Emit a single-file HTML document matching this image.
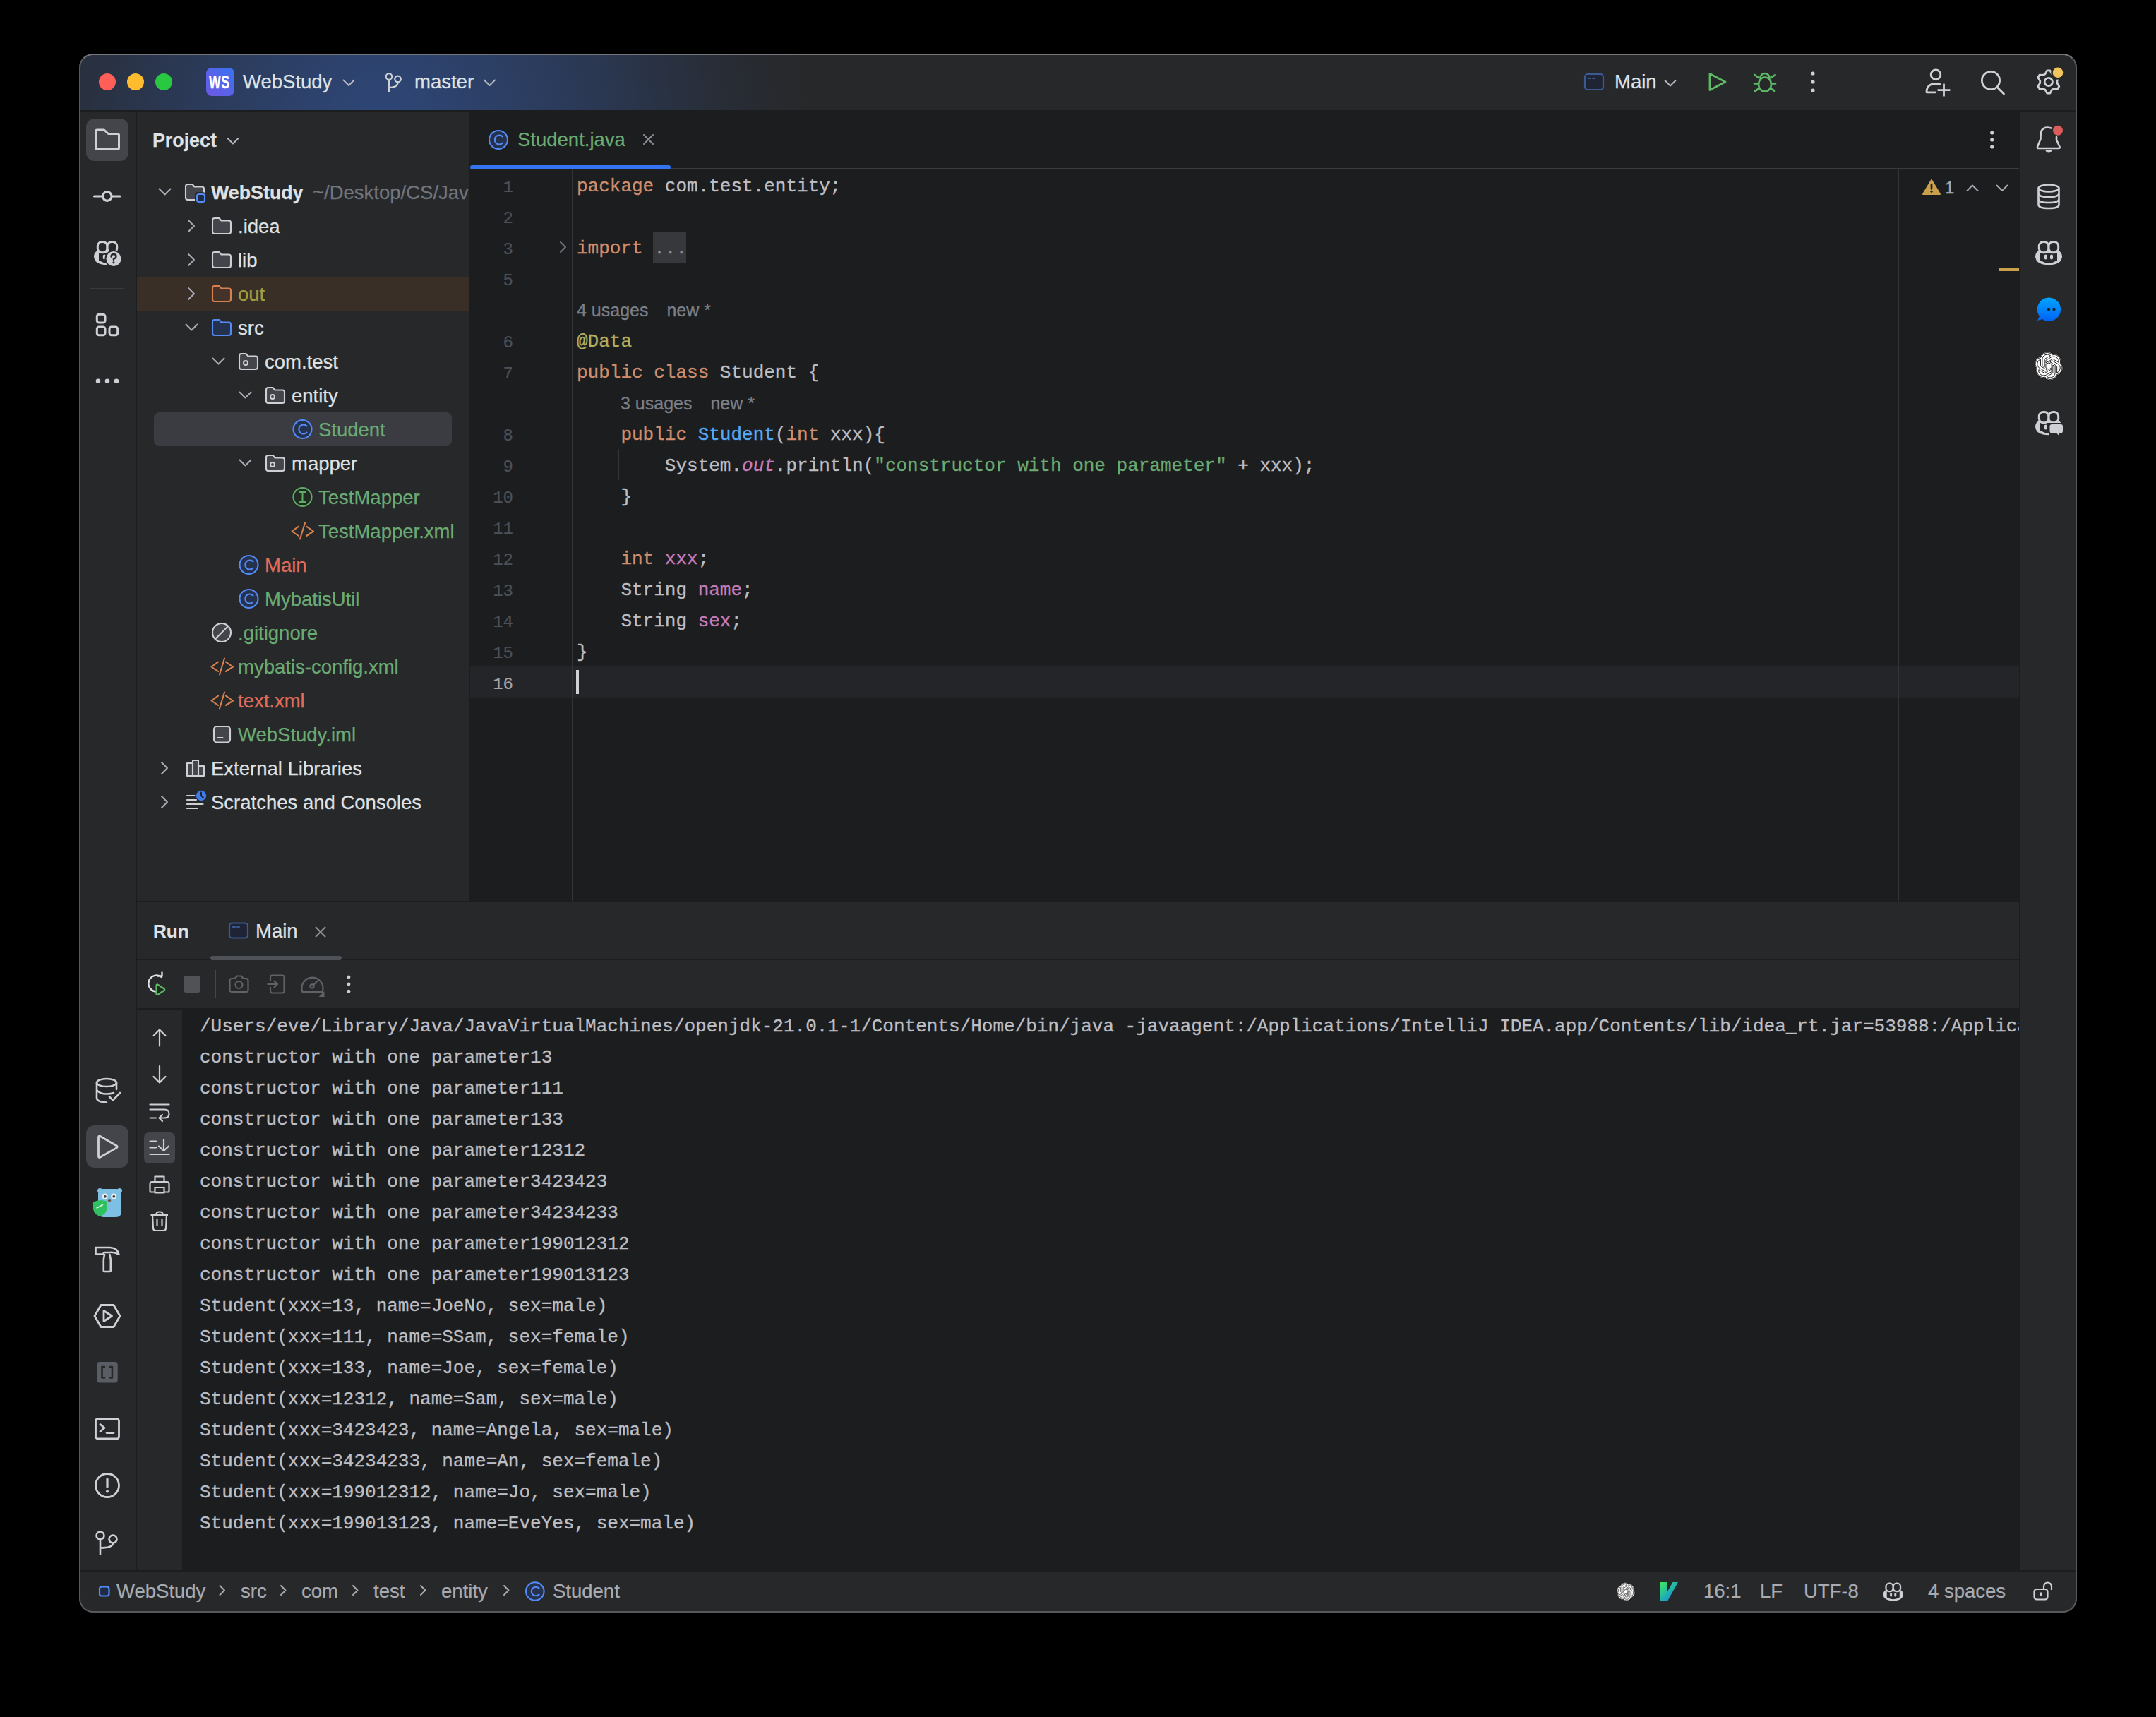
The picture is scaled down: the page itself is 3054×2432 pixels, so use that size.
<!DOCTYPE html><html><head><meta charset='utf-8'><title>IntelliJ IDEA - WebStudy</title><style>
*{box-sizing:border-box;margin:0;padding:0}
html,body{width:3054px;height:2432px;background:#000;overflow:hidden}
body{position:relative;font-family:"Liberation Sans", sans-serif;}
.a{position:absolute}
.t{position:absolute;font-family:"Liberation Sans", sans-serif;font-size:27px;line-height:48px;white-space:nowrap;color:#DFE1E5;-webkit-text-stroke:0.25px currentColor}
.m{position:absolute;font-family:"Liberation Mono", monospace;font-size:26px;line-height:44px;white-space:pre;color:#BCBEC4;-webkit-text-stroke:0.35px currentColor}
.clip{position:absolute;left:0;top:0;width:3054px;height:2432px}
#win{position:absolute;left:0;top:0;width:3054px;height:2432px;clip-path:inset(76px 112px 148px 112px round 20px);}
</style></head><body><div id='win'><div class='a' style='left:112px;top:76px;width:2830px;height:2208px;background:#27282A;'></div><div class='a' style='left:112px;top:76px;width:2830px;height:80px;background:#27282A;background:radial-gradient(ellipse 600px 700px at 430px 130px, rgba(50,88,165,0.66) 0%, rgba(50,88,165,0.38) 45%, rgba(50,88,165,0.10) 80%, rgba(50,88,165,0) 100%), #27282A;'></div><div class='a' style='left:112px;top:156px;width:2830px;height:2px;background:#1C1D1F;'></div><div class='a' style='left:192px;top:158px;width:2px;height:2066px;background:#1C1D1F;'></div><div class='a' style='left:664px;top:158px;width:2196px;height:1118px;background:#1C1D1F;'></div><div class='a' style='left:2860px;top:158px;width:2px;height:2066px;background:#1C1D1F;'></div><div class='a' style='left:194px;top:1276px;width:2666px;height:2px;background:#1C1D1F;'></div><div class='a' style='left:194px;top:1358px;width:2666px;height:2px;background:#1C1D1F;'></div><div class='a' style='left:194px;top:1428px;width:2666px;height:2px;background:#1C1D1F;'></div><div class='a' style='left:258px;top:1430px;width:2602px;height:794px;background:#1C1D1F;'></div><div class='a' style='left:112px;top:2224px;width:2830px;height:2px;background:#1C1D1F;'></div><div class='a' style='left:122px;top:168px;width:60px;height:60px;background:#43454A;border-radius:12px;'></div><div class='a' style='left:122px;top:1594px;width:60px;height:60px;background:#43454A;border-radius:12px;'></div><div class='a' style='left:204px;top:1604px;width:44px;height:44px;background:#43454A;border-radius:7px;'></div><div class='a' style='left:128px;top:408px;width:48px;height:2px;background:#393B40;'></div><div class='a' style='left:140px;top:104px;width:24px;height:24px;border-radius:12px;background:#FF5F57'></div><div class='a' style='left:180px;top:104px;width:24px;height:24px;border-radius:12px;background:#FEBC2E'></div><div class='a' style='left:220px;top:104px;width:24px;height:24px;border-radius:12px;background:#28C840'></div><div class='a' style='left:292px;top:96px;width:40px;height:40px;background:#4B6EF0;border-radius:8px;background:linear-gradient(225deg,#3574F0 0%,#5A62EA 55%,#6F58E2 100%);'></div><div class='t' style='left:296px;top:92px;color:#FFFFFF;font-size:26px;line-height:48px;font-weight:700;transform:scaleX(0.68);transform-origin:0 0;letter-spacing:1px;'>WS</div><div class='t' style='left:344px;top:92px;color:#DFE1E5;font-size:27.5px;line-height:48px;font-weight:400;'>WebStudy</div><div class='t' style='left:587px;top:92px;color:#DFE1E5;font-size:27.5px;line-height:48px;font-weight:400;'>master</div><div class='t' style='left:2287px;top:92px;color:#DFE1E5;font-size:27.5px;line-height:48px;font-weight:400;'>Main</div><div class='t' style='left:216px;top:175px;color:#DFE1E5;font-size:26.8px;line-height:48px;font-weight:700;'>Project</div><div class='clip' style='clip-path:inset(158px 2390px 1156px 194px)'><div class='a' style='left:194px;top:392px;width:470px;height:48px;background:#3A2F26;'></div><div class='a' style='left:218px;top:584px;width:422px;height:48px;background:#3A3C41;border-radius:8px;'></div><div class='t' style='left:299px;top:249px;color:#DFE1E5;font-size:26.8px;line-height:48px;font-weight:700;'>WebStudy</div><div class='t' style='left:337px;top:297px;color:#DFE1E5;font-size:27.5px;line-height:48px;font-weight:400;'>.idea</div><div class='t' style='left:337px;top:345px;color:#DFE1E5;font-size:27.5px;line-height:48px;font-weight:400;'>lib</div><div class='t' style='left:337px;top:393px;color:#A29E3F;font-size:27.5px;line-height:48px;font-weight:400;'>out</div><div class='t' style='left:337px;top:441px;color:#DFE1E5;font-size:27.5px;line-height:48px;font-weight:400;'>src</div><div class='t' style='left:375px;top:489px;color:#DFE1E5;font-size:27.5px;line-height:48px;font-weight:400;'>com.test</div><div class='t' style='left:413px;top:537px;color:#DFE1E5;font-size:27.5px;line-height:48px;font-weight:400;'>entity</div><div class='t' style='left:451px;top:585px;color:#6AAB73;font-size:27.5px;line-height:48px;font-weight:400;'>Student</div><div class='t' style='left:413px;top:633px;color:#DFE1E5;font-size:27.5px;line-height:48px;font-weight:400;'>mapper</div><div class='t' style='left:451px;top:681px;color:#6AAB73;font-size:27.5px;line-height:48px;font-weight:400;'>TestMapper</div><div class='t' style='left:451px;top:729px;color:#6AAB73;font-size:27.5px;line-height:48px;font-weight:400;'>TestMapper.xml</div><div class='t' style='left:375px;top:777px;color:#E06C5C;font-size:27.5px;line-height:48px;font-weight:400;'>Main</div><div class='t' style='left:375px;top:825px;color:#6AAB73;font-size:27.5px;line-height:48px;font-weight:400;'>MybatisUtil</div><div class='t' style='left:337px;top:873px;color:#6AAB73;font-size:27.5px;line-height:48px;font-weight:400;'>.gitignore</div><div class='t' style='left:337px;top:921px;color:#6AAB73;font-size:27.5px;line-height:48px;font-weight:400;'>mybatis-config.xml</div><div class='t' style='left:337px;top:969px;color:#E06C5C;font-size:27.5px;line-height:48px;font-weight:400;'>text.xml</div><div class='t' style='left:337px;top:1017px;color:#6AAB73;font-size:27.5px;line-height:48px;font-weight:400;'>WebStudy.iml</div><div class='t' style='left:299px;top:1065px;color:#DFE1E5;font-size:27.5px;line-height:48px;font-weight:400;'>External Libraries</div><div class='t' style='left:299px;top:1113px;color:#DFE1E5;font-size:27.5px;line-height:48px;font-weight:400;'>Scratches and Consoles</div><div class='t' style='left:443px;top:249px;color:#71757C;font-size:27.5px;line-height:48px;font-weight:400;'>~/Desktop/CS/JavaWeb/WebStudy</div></div><div class='t' style='left:733px;top:174px;color:#6AAB73;font-size:27.5px;line-height:48px;font-weight:400;'>Student.java</div><div class='a' style='left:666px;top:234px;width:284px;height:6px;background:#3574F0;border-radius:3px;'></div><div class='a' style='left:950px;top:238px;width:1910px;height:2px;background:#393B40;'></div><div class='a' style='left:666px;top:944px;width:2194px;height:44px;background:#242528;'></div><div class='a' style='left:925px;top:329px;width:47px;height:43px;background:#37383C;'></div><div class='a' style='left:810px;top:240px;width:2px;height:1036px;background:#313438;'></div><div class='a' style='left:2688px;top:240px;width:2px;height:1036px;background:#313438;'></div><div class='m' style='left:600px;width:127px;text-align:right;top:244px;color:#4B5059;font-size:24px;-webkit-text-stroke:0.2px currentColor'>1</div><div class='m' style='left:817px;top:242px'><span style='color:#CF8E6D;'>package </span><span style='color:#BCBEC4;'>com.test.entity;</span></div><div class='m' style='left:600px;width:127px;text-align:right;top:288px;color:#4B5059;font-size:24px;-webkit-text-stroke:0.2px currentColor'>2</div><div class='m' style='left:600px;width:127px;text-align:right;top:332px;color:#4B5059;font-size:24px;-webkit-text-stroke:0.2px currentColor'>3</div><div class='m' style='left:817px;top:330px'><span style='color:#CF8E6D;'>import </span><span style='color:#8C8F95'>...</span></div><div class='m' style='left:600px;width:127px;text-align:right;top:376px;color:#4B5059;font-size:24px;-webkit-text-stroke:0.2px currentColor'>5</div><div class='t' style='left:817px;top:417px;color:#7C8088;font-size:25px;line-height:44px;font-weight:400;'>4 usages<span style='margin-left:26px'>new *</span></div><div class='m' style='left:600px;width:127px;text-align:right;top:464px;color:#4B5059;font-size:24px;-webkit-text-stroke:0.2px currentColor'>6</div><div class='m' style='left:817px;top:462px'><span style='color:#B3AE60;'>@Data</span></div><div class='m' style='left:600px;width:127px;text-align:right;top:508px;color:#4B5059;font-size:24px;-webkit-text-stroke:0.2px currentColor'>7</div><div class='m' style='left:817px;top:506px'><span style='color:#CF8E6D;'>public class </span><span style='color:#BCBEC4;'>Student {</span></div><div class='t' style='left:879px;top:549px;color:#7C8088;font-size:25px;line-height:44px;font-weight:400;'>3 usages<span style='margin-left:26px'>new *</span></div><div class='m' style='left:600px;width:127px;text-align:right;top:596px;color:#4B5059;font-size:24px;-webkit-text-stroke:0.2px currentColor'>8</div><div class='m' style='left:817px;top:594px'><span style='color:#CF8E6D;'>    public </span><span style='color:#56A8F5;'>Student</span><span style='color:#BCBEC4;'>(</span><span style='color:#CF8E6D;'>int </span><span style='color:#BCBEC4;'>xxx){</span></div><div class='m' style='left:600px;width:127px;text-align:right;top:640px;color:#4B5059;font-size:24px;-webkit-text-stroke:0.2px currentColor'>9</div><div class='m' style='left:817px;top:638px'><span style='color:#BCBEC4;'>        System.</span><span style='color:#C77DBB;font-style:italic;'>out</span><span style='color:#BCBEC4;'>.println(</span><span style='color:#6AAB73;'>&quot;constructor with one parameter&quot;</span><span style='color:#BCBEC4;'> + xxx);</span></div><div class='m' style='left:600px;width:127px;text-align:right;top:684px;color:#4B5059;font-size:24px;-webkit-text-stroke:0.2px currentColor'>10</div><div class='m' style='left:817px;top:682px'><span style='color:#BCBEC4;'>    }</span></div><div class='m' style='left:600px;width:127px;text-align:right;top:728px;color:#4B5059;font-size:24px;-webkit-text-stroke:0.2px currentColor'>11</div><div class='m' style='left:600px;width:127px;text-align:right;top:772px;color:#4B5059;font-size:24px;-webkit-text-stroke:0.2px currentColor'>12</div><div class='m' style='left:817px;top:770px'><span style='color:#CF8E6D;'>    int </span><span style='color:#C77DBB;'>xxx</span><span style='color:#BCBEC4;'>;</span></div><div class='m' style='left:600px;width:127px;text-align:right;top:816px;color:#4B5059;font-size:24px;-webkit-text-stroke:0.2px currentColor'>13</div><div class='m' style='left:817px;top:814px'><span style='color:#BCBEC4;'>    String </span><span style='color:#C77DBB;'>name</span><span style='color:#BCBEC4;'>;</span></div><div class='m' style='left:600px;width:127px;text-align:right;top:860px;color:#4B5059;font-size:24px;-webkit-text-stroke:0.2px currentColor'>14</div><div class='m' style='left:817px;top:858px'><span style='color:#BCBEC4;'>    String </span><span style='color:#C77DBB;'>sex</span><span style='color:#BCBEC4;'>;</span></div><div class='m' style='left:600px;width:127px;text-align:right;top:904px;color:#4B5059;font-size:24px;-webkit-text-stroke:0.2px currentColor'>15</div><div class='m' style='left:817px;top:902px'><span style='color:#BCBEC4;'>}</span></div><div class='m' style='left:600px;width:127px;text-align:right;top:948px;color:#A1A3AB;font-size:24px;-webkit-text-stroke:0.2px currentColor'>16</div><div class='a' style='left:816px;top:949px;width:4px;height:34px;background:#CED0D6;'></div><div class='a' style='left:875px;top:636px;width:2px;height:44px;background:#313438;'></div><div class='t' style='left:2755px;top:242px;color:#A8ABB2;font-size:24px;line-height:48px;font-weight:400;'>1</div><div class='a' style='left:2832px;top:380px;width:28px;height:4px;background:#C9A04C;'></div><div class='t' style='left:217px;top:1295px;color:#DFE1E5;font-size:26px;line-height:48px;font-weight:700;'>Run</div><div class='t' style='left:362px;top:1295px;color:#DFE1E5;font-size:27.5px;line-height:48px;font-weight:400;'>Main</div><div class='a' style='left:298px;top:1354px;width:186px;height:6px;background:#4E5157;border-radius:3px;'></div><div class='a' style='left:260px;top:1382px;width:24px;height:24px;background:#505256;border-radius:4px;'></div><div class='a' style='left:304px;top:1374px;width:2px;height:40px;background:#43454A;'></div><div class='clip' style='clip-path:inset(1430px 194px 208px 258px)'><div class='m' style='left:283px;top:1432px'>/Users/eve/Library/Java/JavaVirtualMachines/openjdk-21.0.1-1/Contents/Home/bin/java -javaagent:/Applications/IntelliJ IDEA.app/Contents/lib/idea_rt.jar=53988:/Applications/IntelliJ IDEA.app/Contents/bin -Dfile.encoding=UTF-8</div><div class='m' style='left:283px;top:1476px'>constructor with one parameter13</div><div class='m' style='left:283px;top:1520px'>constructor with one parameter111</div><div class='m' style='left:283px;top:1564px'>constructor with one parameter133</div><div class='m' style='left:283px;top:1608px'>constructor with one parameter12312</div><div class='m' style='left:283px;top:1652px'>constructor with one parameter3423423</div><div class='m' style='left:283px;top:1696px'>constructor with one parameter34234233</div><div class='m' style='left:283px;top:1740px'>constructor with one parameter199012312</div><div class='m' style='left:283px;top:1784px'>constructor with one parameter199013123</div><div class='m' style='left:283px;top:1828px'>Student(xxx=13, name=JoeNo, sex=male)</div><div class='m' style='left:283px;top:1872px'>Student(xxx=111, name=SSam, sex=female)</div><div class='m' style='left:283px;top:1916px'>Student(xxx=133, name=Joe, sex=female)</div><div class='m' style='left:283px;top:1960px'>Student(xxx=12312, name=Sam, sex=male)</div><div class='m' style='left:283px;top:2004px'>Student(xxx=3423423, name=Angela, sex=male)</div><div class='m' style='left:283px;top:2048px'>Student(xxx=34234233, name=An, sex=female)</div><div class='m' style='left:283px;top:2092px'>Student(xxx=199012312, name=Jo, sex=male)</div><div class='m' style='left:283px;top:2136px'>Student(xxx=199013123, name=EveYes, sex=male)</div></div><div class='t' style='left:165px;top:2229.5px;color:#A8ABB2;font-size:27.5px;line-height:48px;font-weight:400;'>WebStudy</div><div class='t' style='left:341px;top:2229.5px;color:#A8ABB2;font-size:27.5px;line-height:48px;font-weight:400;'>src</div><div class='t' style='left:427px;top:2229.5px;color:#A8ABB2;font-size:27.5px;line-height:48px;font-weight:400;'>com</div><div class='t' style='left:529px;top:2229.5px;color:#A8ABB2;font-size:27.5px;line-height:48px;font-weight:400;'>test</div><div class='t' style='left:625px;top:2229.5px;color:#A8ABB2;font-size:27.5px;line-height:48px;font-weight:400;'>entity</div><div class='t' style='left:783px;top:2229.5px;color:#A8ABB2;font-size:27.5px;line-height:48px;font-weight:400;'>Student</div><div class='t' style='left:2413px;top:2229.5px;color:#A8ABB2;font-size:27.5px;line-height:48px;font-weight:400;'>16:1</div><div class='t' style='left:2493px;top:2229.5px;color:#A8ABB2;font-size:27.5px;line-height:48px;font-weight:400;'>LF</div><div class='t' style='left:2555px;top:2229.5px;color:#A8ABB2;font-size:27.5px;line-height:48px;font-weight:400;'>UTF-8</div><div class='t' style='left:2731px;top:2229.5px;color:#A8ABB2;font-size:27.5px;line-height:48px;font-weight:400;'>4 spaces</div><svg class='a' style='left:0;top:0' width='3054' height='2432' viewBox='0 0 3054 2432'><path d='M486.5,113.5 L494,121 L501.5,113.5' stroke='#B4B8BF' stroke-width='2' fill='none' stroke-linecap='round' stroke-linejoin='round' /><path d='M686,113.5 L693.5,121 L701,113.5' stroke='#B4B8BF' stroke-width='2' fill='none' stroke-linecap='round' stroke-linejoin='round' /><path d='M2358.5,114 L2366,121.5 L2373.5,114' stroke='#B4B8BF' stroke-width='2' fill='none' stroke-linecap='round' stroke-linejoin='round' /><circle cx='551' cy='108.5' r='4.3' stroke='#CED0D6' stroke-width='2.2' fill='none'/><circle cx='563.5' cy='112' r='4.3' stroke='#CED0D6' stroke-width='2.2' fill='none'/><path d='M551,113 V130 M563.5,116.5 Q563.5,124 551,124' stroke='#CED0D6' stroke-width='2.2' fill='none' stroke-linecap='round' stroke-linejoin='round' /><rect x='2245' y='105' width='26' height='22' rx='4' stroke='#3A5A94' stroke-width='2.2' fill='#1E2433'/><path d='M2249.5,111 h3.5 M2256,111 h3' stroke='#3A5A94' stroke-width='2' fill='none' stroke-linecap='round' stroke-linejoin='round' /><path d='M2422,104.5 L2444,116 L2422,127.5 Z' stroke='#5FB865' stroke-width='2.8' fill='none' stroke-linecap='round' stroke-linejoin='round' /><g stroke='#5FB865' stroke-width='2.7' fill='none' stroke-linecap='round'><path d='M2493.5,110.5 a6.5,6.5 0 0 1 13,0'/><ellipse cx='2500' cy='119.5' rx='9' ry='10'/><path d='M2485.5,106 L2491,110 M2514.5,106 L2509,110 M2485,118.5 H2491 M2515,118.5 H2509 M2486,129 L2491.5,125.5 M2514,129 L2508.5,125.5'/></g><circle cx='2568' cy='104' r='2.6' fill='#CED0D6'/><circle cx='2568' cy='116' r='2.6' fill='#CED0D6'/><circle cx='2568' cy='128' r='2.6' fill='#CED0D6'/><circle cx='2742' cy='105.8' r='6.8' stroke='#CED0D6' stroke-width='2.8' fill='none'/><path d='M2741.5,130.8 H2729 Q2729,118.6 2742,118.6 Q2746,118.6 2748.5,119.5' stroke='#CED0D6' stroke-width='2.8' fill='none' stroke-linecap='round' stroke-linejoin='round' /><path d='M2745.5,127.6 H2761.5 M2753.5,119.6 V135.6' stroke='#CED0D6' stroke-width='2.8' fill='none' stroke-linecap='round' stroke-linejoin='round' /><circle cx='2820' cy='114' r='12.6' stroke='#CED0D6' stroke-width='2.8' fill='none'/><path d='M2829.5,124 L2838.5,133' stroke='#CED0D6' stroke-width='2.8' fill='none' stroke-linecap='round' stroke-linejoin='round' /><path d='M2899.7,99.9 L2903.9,99.9 L2906.5,104.7 L2909.2,106.3 L2914.7,106.1 L2916.8,109.8 L2913.9,114.4 L2913.9,117.6 L2916.8,122.2 L2914.7,125.9 L2909.2,125.7 L2906.5,127.3 L2903.9,132.1 L2899.7,132.1 L2897.1,127.3 L2894.4,125.7 L2888.9,125.9 L2886.8,122.2 L2889.7,117.6 L2889.7,114.4 L2886.8,109.8 L2888.9,106.1 L2894.4,106.3 L2897.1,104.7 Z' stroke='#CED0D6' stroke-width='2.8' fill='none' stroke-linecap='round' stroke-linejoin='round' /><circle cx='2901.8' cy='116' r='5.6' stroke='#CED0D6' stroke-width='2.8' fill='none'/><circle cx='2915' cy='102.8' r='8.6' fill='#F2C55C' stroke='#27282A' stroke-width='2.6'/><path d='M135.5,186 Q135.5,184 137.5,184 H147.5 L153.5,189.5 H166.5 Q168.5,189.5 168.5,191.5 V209.5 Q168.5,211.5 166.5,211.5 H137.5 Q135.5,211.5 135.5,209.5 Z' stroke='#CED0D6' stroke-width='3' fill='none' stroke-linecap='round' stroke-linejoin='round' /><path d='M133.5,278 H144 M159.5,278 H170' stroke='#CED0D6' stroke-width='3.2' fill='none' stroke-linecap='round' stroke-linejoin='round' /><circle cx='151.8' cy='278' r='6.3' stroke='#CED0D6' stroke-width='3.2' fill='none'/><g transform='translate(133,341) scale(1.0)'><path d='M4,14.5 Q0,17.5 0,22.5 Q1,34.2 19,34.2 Q37,34.2 38,22.5 Q38,17.5 34,14.5 Z' fill='#CED0D6'/><path d='M7,17 H31 V28 Q25,31.5 19,31.5 Q13,31.5 7,28 Z' fill='#27282A'/><rect x='5.3' y='1.5' width='13.6' height='15.2' rx='6' stroke='#CED0D6' stroke-width='3' fill='#27282A'/><rect x='19.1' y='1.5' width='13.6' height='15.2' rx='6' stroke='#CED0D6' stroke-width='3' fill='#27282A'/><rect x='12.8' y='19.6' width='4' height='7' rx='2' fill='#CED0D6'/><circle cx='28' cy='25.5' r='12.5' fill='#27282A'/><circle cx='28' cy='25.5' r='10.5' fill='#CED0D6'/><path d='M24.5,22.5 Q24.5,19 28,19 Q31.5,19 31.5,22 Q31.5,24.5 28,25.5 V27' stroke='#27282A' stroke-width='2.4' fill='none' stroke-linecap='round'/><circle cx='28' cy='30.8' r='1.6' fill='#27282A'/></g><rect x='137.3' y='445.3' width='11.7' height='11.7' rx='3' stroke='#CED0D6' stroke-width='3' fill='none'/><rect x='137.3' y='463' width='11.7' height='11.7' rx='3' stroke='#CED0D6' stroke-width='3' fill='none'/><rect x='155' y='463' width='11.7' height='11.7' rx='3' stroke='#CED0D6' stroke-width='3' fill='none'/><circle cx='139' cy='539.8' r='3.3' fill='#CED0D6'/><circle cx='152' cy='539.8' r='3.3' fill='#CED0D6'/><circle cx='165' cy='539.8' r='3.3' fill='#CED0D6'/><g stroke='#CED0D6' stroke-width='2.6' fill='none' stroke-linecap='round'><ellipse cx='151' cy='1533.5' rx='14' ry='5.5'/><path d='M137,1533.5 V1555 Q137,1561 151,1561.5 M165,1533.5 V1543 M137,1544 Q141,1549.5 151,1549.5 Q157,1549.5 161,1548'/><path d='M155,1553.5 L160,1558.5 L170,1548'/></g><path d='M139.5,1611 Q139.5,1608 142,1609.5 L165.5,1623 Q167,1624.3 165.5,1625.6 L142,1639 Q139.5,1640.5 139.5,1637.5 Z' stroke='#CED0D6' stroke-width='2.8' fill='none' stroke-linecap='round' stroke-linejoin='round' /><g><path d='M139,1691 Q139,1684 146,1684 H165 Q172,1684 172,1691 V1716 Q172,1724 164,1724 H147 Q139,1724 139,1716 Z' fill='#7DC0E3'/><circle cx='141.5' cy='1686.5' r='3.5' fill='#7DC0E3'/><circle cx='169.5' cy='1686.5' r='3.5' fill='#7DC0E3'/><circle cx='148.6' cy='1694.6' r='4' fill='#E8EEF2'/><circle cx='161.1' cy='1694.6' r='4' fill='#E8EEF2'/><circle cx='148.8' cy='1694.8' r='1.9' fill='#3A3A3A'/><circle cx='161.3' cy='1694.8' r='1.9' fill='#3A3A3A'/><ellipse cx='155' cy='1700.5' rx='2.2' ry='1.6' fill='#6B4A3A'/><path d='M132,1702.5 Q141.5,1698 151.5,1701.5 V1712 Q150.5,1720 141.5,1723 Q133,1720 132,1712 Z' fill='#2FC160'/><path d='M137,1711 L141,1709 L145.5,1706.5' stroke='#D8F5DF' stroke-width='1.6' fill='none' stroke-linecap='round'/></g><path d='M135.5,1767 H156 Q166.5,1767.5 168.5,1777 Q162,1773 155.5,1774 H147.5 L146,1776.5 H135.5 Z' stroke='#CED0D6' stroke-width='2.6' fill='none' stroke-linecap='round' stroke-linejoin='round' /><path d='M148,1777 L146.8,1784 V1799.5 Q146.8,1801 148.3,1801 H155.3 Q156.8,1801 156.8,1799.5 V1784 L155.5,1777' stroke='#CED0D6' stroke-width='2.6' fill='none' stroke-linecap='round' stroke-linejoin='round' /><path d='M143,1848.5 H161 L170,1864 L161,1879.5 H143 L134,1864 Z' stroke='#CED0D6' stroke-width='2.8' fill='none' stroke-linecap='round' stroke-linejoin='round' /><path d='M147,1856.5 L158.5,1864 L147,1871.5 Z' stroke='#CED0D6' stroke-width='2.8' fill='none' stroke-linecap='round' stroke-linejoin='round' /><rect x='137' y='1929' width='29.7' height='29.6' rx='4' fill='#5A5D63'/><path d='M148,1936 H144.5 V1951.5 H148 M155.5,1936 H159 V1951.5 H155.5' stroke='#27282A' stroke-width='2.6' fill='none' stroke-linecap='round' stroke-linejoin='round' /><rect x='135.5' y='2009.5' width='33' height='28.5' rx='3' stroke='#CED0D6' stroke-width='2.8' fill='none'/><path d='M142,2017.5 L148,2022.5 L142,2027.5 M151,2029.5 H161' stroke='#CED0D6' stroke-width='2.8' fill='none' stroke-linecap='round' stroke-linejoin='round' /><circle cx='152' cy='2104' r='16.5' stroke='#CED0D6' stroke-width='2.8' fill='none'/><path d='M152,2095 V2106' stroke='#CED0D6' stroke-width='3.2' fill='none' stroke-linecap='round' stroke-linejoin='round' /><circle cx='152' cy='2112.5' r='2' fill='#CED0D6'/><circle cx='142' cy='2175' r='5.5' stroke='#CED0D6' stroke-width='2.6' fill='none'/><circle cx='160' cy='2180' r='5.5' stroke='#CED0D6' stroke-width='2.6' fill='none'/><path d='M142,2180.5 V2201.5 M160,2185.5 Q160,2192.5 142,2192.5' stroke='#CED0D6' stroke-width='2.6' fill='none' stroke-linecap='round' stroke-linejoin='round' /><path d='M322.5,196 L330,203.5 L337.5,196' stroke='#B4B8BF' stroke-width='2' fill='none' stroke-linecap='round' stroke-linejoin='round' /><path d='M225.5,267.5 L233.5,275.5 L241.5,267.5' stroke='#A8ADB5' stroke-width='2' fill='none' stroke-linecap='round' stroke-linejoin='round' /><path d='M263,264 Q263,261 266,261 H272.5 L275.5,264.5 H286 Q289,264.5 289,267.5 V280 Q289,283 286,283 H266 Q263,283 263,280 Z' stroke='#CED0D6' stroke-width='2.1' fill='#43454A' stroke-linecap='round' stroke-linejoin='round' /><rect x='276' y='272' width='15' height='15' rx='4' fill='#27282A'/><rect x='279' y='275' width='11' height='11' rx='3' stroke='#548AF7' stroke-width='2.2' fill='#1F2A44'/><path d='M267.0,312 L275.0,320 L267.0,328' stroke='#A8ADB5' stroke-width='2' fill='none' stroke-linecap='round' stroke-linejoin='round' /><path d='M301,312 Q301,309 304,309 H310.5 L313.5,312.5 H324 Q327,312.5 327,315.5 V328 Q327,331 324,331 H304 Q301,331 301,328 Z' stroke='#CED0D6' stroke-width='2.1' fill='#43454A' stroke-linecap='round' stroke-linejoin='round' /><path d='M267.0,360 L275.0,368 L267.0,376' stroke='#A8ADB5' stroke-width='2' fill='none' stroke-linecap='round' stroke-linejoin='round' /><path d='M301,360 Q301,357 304,357 H310.5 L313.5,360.5 H324 Q327,360.5 327,363.5 V376 Q327,379 324,379 H304 Q301,379 301,376 Z' stroke='#CED0D6' stroke-width='2.1' fill='#43454A' stroke-linecap='round' stroke-linejoin='round' /><path d='M267.0,408 L275.0,416 L267.0,424' stroke='#A8ADB5' stroke-width='2' fill='none' stroke-linecap='round' stroke-linejoin='round' /><path d='M301,408 Q301,405 304,405 H310.5 L313.5,408.5 H324 Q327,408.5 327,411.5 V424 Q327,427 324,427 H304 Q301,427 301,424 Z' stroke='#D9804F' stroke-width='2.1' fill='#45322B' stroke-linecap='round' stroke-linejoin='round' /><path d='M263.5,459.5 L271.5,467.5 L279.5,459.5' stroke='#A8ADB5' stroke-width='2' fill='none' stroke-linecap='round' stroke-linejoin='round' /><path d='M301,456 Q301,453 304,453 H310.5 L313.5,456.5 H324 Q327,456.5 327,459.5 V472 Q327,475 324,475 H304 Q301,475 301,472 Z' stroke='#548AF7' stroke-width='2.1' fill='#25324D' stroke-linecap='round' stroke-linejoin='round' /><path d='M301.5,507.5 L309.5,515.5 L317.5,507.5' stroke='#A8ADB5' stroke-width='2' fill='none' stroke-linecap='round' stroke-linejoin='round' /><path d='M339,504 Q339,501 342,501 H348.5 L351.5,504.5 H362 Q365,504.5 365,507.5 V520 Q365,523 362,523 H342 Q339,523 339,520 Z' stroke='#CED0D6' stroke-width='2.1' fill='#43454A' stroke-linecap='round' stroke-linejoin='round' /><circle cx='348' cy='514' r='3' stroke='#CED0D6' stroke-width='2' fill='none'/><path d='M339.5,555.5 L347.5,563.5 L355.5,555.5' stroke='#A8ADB5' stroke-width='2' fill='none' stroke-linecap='round' stroke-linejoin='round' /><path d='M377,552 Q377,549 380,549 H386.5 L389.5,552.5 H400 Q403,552.5 403,555.5 V568 Q403,571 400,571 H380 Q377,571 377,568 Z' stroke='#CED0D6' stroke-width='2.1' fill='#43454A' stroke-linecap='round' stroke-linejoin='round' /><circle cx='386' cy='562' r='3' stroke='#CED0D6' stroke-width='2' fill='none'/><circle cx='428.5' cy='608' r='13' stroke='#548AF7' stroke-width='2.1' fill='#25324D'/><path d='M434.5,603.5 A6.5,6.5 0 1 0 434.5,612.5' stroke='#548AF7' stroke-width='2.1' fill='none' stroke-linecap='round' stroke-linejoin='round' /><path d='M339.5,651.5 L347.5,659.5 L355.5,651.5' stroke='#A8ADB5' stroke-width='2' fill='none' stroke-linecap='round' stroke-linejoin='round' /><path d='M377,648 Q377,645 380,645 H386.5 L389.5,648.5 H400 Q403,648.5 403,651.5 V664 Q403,667 400,667 H380 Q377,667 377,664 Z' stroke='#CED0D6' stroke-width='2.1' fill='#43454A' stroke-linecap='round' stroke-linejoin='round' /><circle cx='386' cy='658' r='3' stroke='#CED0D6' stroke-width='2' fill='none'/><circle cx='428.5' cy='704' r='13' stroke='#5FAD65' stroke-width='2.1' fill='#1F2B22'/><path d='M424.5,697 H432.5 M428.5,697 V711 M424.5,711 H432.5' stroke='#5FAD65' stroke-width='2' fill='none' stroke-linecap='round' stroke-linejoin='round' stroke-linecap='butt'/><path d='M423.0,745.7 L413.5,752.5 L423.0,759' stroke='#D9804F' stroke-width='2.1' fill='none' stroke-linecap='round' stroke-linejoin='round' /><path d='M445.0,745.7 L435.5,752.5' stroke='#D9804F' stroke-width='0' fill='none' stroke-linecap='round' stroke-linejoin='round' /><path d='M434.0,745.7 L444.0,752.5 L434.0,759' stroke='#D9804F' stroke-width='2.1' fill='none' stroke-linecap='round' stroke-linejoin='round' /><path d='M432.0,740.5 L425.0,763.5' stroke='#D9804F' stroke-width='2.1' fill='none' stroke-linecap='round' stroke-linejoin='round' /><circle cx='352.5' cy='800' r='13' stroke='#548AF7' stroke-width='2.1' fill='#25324D'/><path d='M358.5,795.5 A6.5,6.5 0 1 0 358.5,804.5' stroke='#548AF7' stroke-width='2.1' fill='none' stroke-linecap='round' stroke-linejoin='round' /><circle cx='352.5' cy='848' r='13' stroke='#548AF7' stroke-width='2.1' fill='#25324D'/><path d='M358.5,843.5 A6.5,6.5 0 1 0 358.5,852.5' stroke='#548AF7' stroke-width='2.1' fill='none' stroke-linecap='round' stroke-linejoin='round' /><circle cx='314.0' cy='896' r='13' stroke='#CED0D6' stroke-width='2.1' fill='#43454A'/><path d='M323.0,887 L305.0,905' stroke='#CED0D6' stroke-width='2' fill='none' stroke-linecap='round' stroke-linejoin='round' /><path d='M309.0,937.7 L299.5,944.5 L309.0,951' stroke='#D9804F' stroke-width='2.1' fill='none' stroke-linecap='round' stroke-linejoin='round' /><path d='M331.0,937.7 L321.5,944.5' stroke='#D9804F' stroke-width='0' fill='none' stroke-linecap='round' stroke-linejoin='round' /><path d='M320.0,937.7 L330.0,944.5 L320.0,951' stroke='#D9804F' stroke-width='2.1' fill='none' stroke-linecap='round' stroke-linejoin='round' /><path d='M318.0,932.5 L311.0,955.5' stroke='#D9804F' stroke-width='2.1' fill='none' stroke-linecap='round' stroke-linejoin='round' /><path d='M309.0,985.7 L299.5,992.5 L309.0,999' stroke='#D9804F' stroke-width='2.1' fill='none' stroke-linecap='round' stroke-linejoin='round' /><path d='M331.0,985.7 L321.5,992.5' stroke='#D9804F' stroke-width='0' fill='none' stroke-linecap='round' stroke-linejoin='round' /><path d='M320.0,985.7 L330.0,992.5 L320.0,999' stroke='#D9804F' stroke-width='2.1' fill='none' stroke-linecap='round' stroke-linejoin='round' /><path d='M318.0,980.5 L311.0,1003.5' stroke='#D9804F' stroke-width='2.1' fill='none' stroke-linecap='round' stroke-linejoin='round' /><rect x='303.0' y='1029' width='23' height='22.5' rx='4' stroke='#CED0D6' stroke-width='2.1' fill='#43454A'/><path d='M308.5,1045 H315.5' stroke='#CED0D6' stroke-width='2' fill='none' stroke-linecap='round' stroke-linejoin='round' /><path d='M229.0,1080 L237.0,1088 L229.0,1096' stroke='#A8ADB5' stroke-width='2' fill='none' stroke-linecap='round' stroke-linejoin='round' /><path d='M265.0,1081 H273.0 V1099 H265.0 Z M273.0,1077 H281.0 V1099 H273.0 Z M281.0,1085 H289.0 V1099 H281.0 Z' stroke='#CED0D6' stroke-width='2.1' fill='#43454A' stroke-linecap='round' stroke-linejoin='round' /><path d='M229.0,1128 L237.0,1136 L229.0,1144' stroke='#A8ADB5' stroke-width='2' fill='none' stroke-linecap='round' stroke-linejoin='round' /><path d='M265.0,1127 H275.5 M265.0,1133 H278.0 M265.0,1139 H287.5 M265.0,1145 H279.5' stroke='#CED0D6' stroke-width='2.2' fill='none' stroke-linecap='round' stroke-linejoin='round' stroke-linecap='butt'/><circle cx='285.0' cy='1127' r='7.2' fill='#3F7CEA'/><path d='M285.0,1122.5 V1127 L288.0,1130' stroke='#1C1D1F' stroke-width='1.8' fill='none' stroke-linecap='round' stroke-linejoin='round' /><circle cx='706' cy='198' r='13' stroke='#548AF7' stroke-width='2.1' fill='#25324D'/><path d='M712,193.5 A6.5,6.5 0 1 0 712,202.5' stroke='#548AF7' stroke-width='2.1' fill='none' stroke-linecap='round' stroke-linejoin='round' /><path d='M912,191 L925,204 M925,191 L912,204' stroke='#8C8F95' stroke-width='2' fill='none' stroke-linecap='round' stroke-linejoin='round' /><circle cx='2821.7' cy='188' r='2.6' fill='#CED0D6'/><circle cx='2821.7' cy='198' r='2.6' fill='#CED0D6'/><circle cx='2821.7' cy='208' r='2.6' fill='#CED0D6'/><path d='M794,343 L801,350 L794,357' stroke='#6F737A' stroke-width='2' fill='none' stroke-linecap='round' stroke-linejoin='round' /><path d='M2736,255 L2748,275 H2724 Z' fill='#C9A04C' stroke='#C9A04C' stroke-width='2' stroke-linejoin='round'/><path d='M2736,261.5 V267.5' stroke='#1C1D1F' stroke-width='2.6' fill='none' stroke-linecap='round' stroke-linejoin='round' /><circle cx='2736' cy='271.3' r='1.5' fill='#1C1D1F'/><path d='M2786.5,270 L2794,262.5 L2801.5,270' stroke='#A8ABB2' stroke-width='2' fill='none' stroke-linecap='round' stroke-linejoin='round' /><path d='M2828.5,262.5 L2836,270 L2843.5,262.5' stroke='#A8ABB2' stroke-width='2' fill='none' stroke-linecap='round' stroke-linejoin='round' /><g stroke='#CED0D6' stroke-width='2.6' fill='none' stroke-linecap='round' stroke-linejoin='round'><path d='M2905.5,181.5 Q2902,180.5 2900,180.5 Q2890,181 2890.5,193 V197 L2886,208 Q2885.5,210 2888,210 H2916 Q2918.5,210 2917.5,208 L2913,198 V194'/></g><path d='M2897,212.5 H2907 Q2905,216.5 2902,216.5 Q2899,216.5 2897,212.5 Z' fill='#CED0D6'/><circle cx='2915' cy='184.7' r='7' fill='#DB5C5C'/><g stroke='#CED0D6' stroke-width='2.6' fill='none'><ellipse cx='2902' cy='266.5' rx='14.5' ry='5'/><path d='M2887.5,266.5 V290 Q2887.5,295 2902,295 Q2916.5,295 2916.5,290 V266.5 M2887.5,274 Q2887.5,279 2902,279 Q2916.5,279 2916.5,274 M2887.5,282 Q2887.5,287 2902,287 Q2916.5,287 2916.5,282'/></g><g transform='translate(2883,341) scale(1.0)'><path d='M4,14.5 Q0,17.5 0,22.5 Q1,34.2 19,34.2 Q37,34.2 38,22.5 Q38,17.5 34,14.5 Z' fill='#CED0D6'/><path d='M7,17 H31 V28 Q25,31.5 19,31.5 Q13,31.5 7,28 Z' fill='#27282A'/><rect x='5.3' y='1.5' width='13.6' height='15.2' rx='6' stroke='#CED0D6' stroke-width='3' fill='#27282A'/><rect x='19.1' y='1.5' width='13.6' height='15.2' rx='6' stroke='#CED0D6' stroke-width='3' fill='#27282A'/><rect x='12.8' y='19.6' width='4' height='7' rx='2' fill='#CED0D6'/><rect x='21' y='19.6' width='4' height='7' rx='2' fill='#CED0D6'/></g><defs><linearGradient id='bch' x1='0' y1='0' x2='0' y2='1'><stop offset='0' stop-color='#00A5FF'/><stop offset='1' stop-color='#0062F5'/></linearGradient></defs><path d='M2902,421.5 A16.7,16.7 0 1 1 2893,452 L2886,454 L2889,448 A16.7,16.7 0 0 1 2902,421.5 Z' fill='url(#bch)'/><circle cx='2902' cy='438' r='2.2' fill='#1C1D1F'/><circle cx='2909.5' cy='438' r='2.2' fill='#1C1D1F'/><g transform='translate(2883.00,499.50) scale(1.5833)'><path d='M22.2819 9.8211a5.9847 5.9847 0 0 0-.5157-4.9108 6.0462 6.0462 0 0 0-6.5098-2.9A6.0651 6.0651 0 0 0 4.9807 4.1818a5.9847 5.9847 0 0 0-3.9977 2.9 6.0462 6.0462 0 0 0 .7427 7.0966 5.98 5.98 0 0 0 .511 4.9107 6.051 6.051 0 0 0 6.5146 2.9001A5.9847 5.9847 0 0 0 13.2599 24a6.0557 6.0557 0 0 0 5.7718-4.2058 5.9894 5.9894 0 0 0 3.9977-2.9001 6.0557 6.0557 0 0 0-.7475-7.0729zm-9.022 12.6081a4.4755 4.4755 0 0 1-2.8764-1.0408l.1419-.0804 4.7783-2.7582a.7948.7948 0 0 0 .3927-.6813v-6.7369l2.02 1.1686a.071.071 0 0 1 .038.052v5.5826a4.504 4.504 0 0 1-4.4945 4.4944zm-9.6607-4.1254a4.4708 4.4708 0 0 1-.5346-3.0137l.142.0852 4.783 2.7582a.7712.7712 0 0 0 .7806 0l5.8428-3.3685v2.3324a.0804.0804 0 0 1-.0332.0615L9.74 19.9502a4.4992 4.4992 0 0 1-6.1408-1.6464zM2.3408 7.8956a4.485 4.485 0 0 1 2.3655-1.9728V11.6a.7664.7664 0 0 0 .3879.6765l5.8144 3.3543-2.0201 1.1685a.0757.0757 0 0 1-.071 0l-4.8303-2.7865A4.504 4.504 0 0 1 2.3408 7.872zm16.5963 3.8558L13.1038 8.364 15.1192 7.2a.0757.0757 0 0 1 .071 0l4.8303 2.7913a4.4944 4.4944 0 0 1-.6765 8.1042v-5.6772a.79.79 0 0 0-.407-.667zm2.0107-3.0231l-.142-.0852-4.7735-2.7818a.7759.7759 0 0 0-.7854 0L9.409 9.2297V6.8974a.0662.0662 0 0 1 .0284-.0615l4.8303-2.7866a4.4992 4.4992 0 0 1 6.6802 4.66zM8.3065 12.863l-2.02-1.1638a.0804.0804 0 0 1-.038-.0567V6.0742a4.4992 4.4992 0 0 1 7.3757-3.4537l-.142.0805L8.704 5.459a.7948.7948 0 0 0-.3927.6813zm1.0976-2.3654l2.602-1.4998 2.6069 1.4998v2.9994l-2.5974 1.5-2.6067-1.5Z' fill='#FFFFFF' stroke='#000' stroke-width='1.7'/><circle cx='12.1' cy='12' r='10.3' fill='#FFFFFF'/><path d='M22.2819 9.8211a5.9847 5.9847 0 0 0-.5157-4.9108 6.0462 6.0462 0 0 0-6.5098-2.9A6.0651 6.0651 0 0 0 4.9807 4.1818a5.9847 5.9847 0 0 0-3.9977 2.9 6.0462 6.0462 0 0 0 .7427 7.0966 5.98 5.98 0 0 0 .511 4.9107 6.051 6.051 0 0 0 6.5146 2.9001A5.9847 5.9847 0 0 0 13.2599 24a6.0557 6.0557 0 0 0 5.7718-4.2058 5.9894 5.9894 0 0 0 3.9977-2.9001 6.0557 6.0557 0 0 0-.7475-7.0729zm-9.022 12.6081a4.4755 4.4755 0 0 1-2.8764-1.0408l.1419-.0804 4.7783-2.7582a.7948.7948 0 0 0 .3927-.6813v-6.7369l2.02 1.1686a.071.071 0 0 1 .038.052v5.5826a4.504 4.504 0 0 1-4.4945 4.4944zm-9.6607-4.1254a4.4708 4.4708 0 0 1-.5346-3.0137l.142.0852 4.783 2.7582a.7712.7712 0 0 0 .7806 0l5.8428-3.3685v2.3324a.0804.0804 0 0 1-.0332.0615L9.74 19.9502a4.4992 4.4992 0 0 1-6.1408-1.6464zM2.3408 7.8956a4.485 4.485 0 0 1 2.3655-1.9728V11.6a.7664.7664 0 0 0 .3879.6765l5.8144 3.3543-2.0201 1.1685a.0757.0757 0 0 1-.071 0l-4.8303-2.7865A4.504 4.504 0 0 1 2.3408 7.872zm16.5963 3.8558L13.1038 8.364 15.1192 7.2a.0757.0757 0 0 1 .071 0l4.8303 2.7913a4.4944 4.4944 0 0 1-.6765 8.1042v-5.6772a.79.79 0 0 0-.407-.667zm2.0107-3.0231l-.142-.0852-4.7735-2.7818a.7759.7759 0 0 0-.7854 0L9.409 9.2297V6.8974a.0662.0662 0 0 1 .0284-.0615l4.8303-2.7866a4.4992 4.4992 0 0 1 6.6802 4.66zM8.3065 12.863l-2.02-1.1638a.0804.0804 0 0 1-.038-.0567V6.0742a4.4992 4.4992 0 0 1 7.3757-3.4537l-.142.0805L8.704 5.459a.7948.7948 0 0 0-.3927.6813zm1.0976-2.3654l2.602-1.4998 2.6069 1.4998v2.9994l-2.5974 1.5-2.6067-1.5Z' fill='#FFFFFF' stroke='#FFFFFF' stroke-width='0.9'/><path d='M22.2819 9.8211a5.9847 5.9847 0 0 0-.5157-4.9108 6.0462 6.0462 0 0 0-6.5098-2.9A6.0651 6.0651 0 0 0 4.9807 4.1818a5.9847 5.9847 0 0 0-3.9977 2.9 6.0462 6.0462 0 0 0 .7427 7.0966 5.98 5.98 0 0 0 .511 4.9107 6.051 6.051 0 0 0 6.5146 2.9001A5.9847 5.9847 0 0 0 13.2599 24a6.0557 6.0557 0 0 0 5.7718-4.2058 5.9894 5.9894 0 0 0 3.9977-2.9001 6.0557 6.0557 0 0 0-.7475-7.0729zm-9.022 12.6081a4.4755 4.4755 0 0 1-2.8764-1.0408l.1419-.0804 4.7783-2.7582a.7948.7948 0 0 0 .3927-.6813v-6.7369l2.02 1.1686a.071.071 0 0 1 .038.052v5.5826a4.504 4.504 0 0 1-4.4945 4.4944zm-9.6607-4.1254a4.4708 4.4708 0 0 1-.5346-3.0137l.142.0852 4.783 2.7582a.7712.7712 0 0 0 .7806 0l5.8428-3.3685v2.3324a.0804.0804 0 0 1-.0332.0615L9.74 19.9502a4.4992 4.4992 0 0 1-6.1408-1.6464zM2.3408 7.8956a4.485 4.485 0 0 1 2.3655-1.9728V11.6a.7664.7664 0 0 0 .3879.6765l5.8144 3.3543-2.0201 1.1685a.0757.0757 0 0 1-.071 0l-4.8303-2.7865A4.504 4.504 0 0 1 2.3408 7.872zm16.5963 3.8558L13.1038 8.364 15.1192 7.2a.0757.0757 0 0 1 .071 0l4.8303 2.7913a4.4944 4.4944 0 0 1-.6765 8.1042v-5.6772a.79.79 0 0 0-.407-.667zm2.0107-3.0231l-.142-.0852-4.7735-2.7818a.7759.7759 0 0 0-.7854 0L9.409 9.2297V6.8974a.0662.0662 0 0 1 .0284-.0615l4.8303-2.7866a4.4992 4.4992 0 0 1 6.6802 4.66zM8.3065 12.863l-2.02-1.1638a.0804.0804 0 0 1-.038-.0567V6.0742a4.4992 4.4992 0 0 1 7.3757-3.4537l-.142.0805L8.704 5.459a.7948.7948 0 0 0-.3927.6813zm1.0976-2.3654l2.602-1.4998 2.6069 1.4998v2.9994l-2.5974 1.5-2.6067-1.5Z' fill='none' stroke='#000' stroke-width='0.55'/></g><g transform='translate(2883,582) scale(1.0)'><path d='M4,14.5 Q0,17.5 0,22.5 Q1,34.2 19,34.2 Q37,34.2 38,22.5 Q38,17.5 34,14.5 Z' fill='#CED0D6'/><path d='M7,17 H31 V28 Q25,31.5 19,31.5 Q13,31.5 7,28 Z' fill='#27282A'/><rect x='5.3' y='1.5' width='13.6' height='15.2' rx='6' stroke='#CED0D6' stroke-width='3' fill='#27282A'/><rect x='19.1' y='1.5' width='13.6' height='15.2' rx='6' stroke='#CED0D6' stroke-width='3' fill='#27282A'/><rect x='12.8' y='19.6' width='4' height='7' rx='2' fill='#CED0D6'/><rect x='19' y='17' width='22' height='20' fill='#27282A'/><path d='M23.5,19 H36 Q39,19 39,22 V28.5 Q39,31.5 36,31.5 H34 V35.5 L30,31.5 H23.5 Q20.5,31.5 20.5,28.5 V22 Q20.5,19 23.5,19 Z' fill='#CED0D6'/></g><rect x='325' y='1307.5' width='26' height='21' rx='4' stroke='#3A5A94' stroke-width='2.2' fill='#1E2433'/><path d='M329.5,1313 h3.5 M336,1313 h3' stroke='#3A5A94' stroke-width='2' fill='none' stroke-linecap='round' stroke-linejoin='round' /><path d='M447.5,1313.5 L460.5,1326.5 M460.5,1313.5 L447.5,1326.5' stroke='#8C8F95' stroke-width='2' fill='none' stroke-linecap='round' stroke-linejoin='round' /><path d='M223,1404.5 A11.5,11.5 0 1 1 229,1384 M223.5,1382.5 H229.5 V1377.5' stroke='#DFE1E5' stroke-width='2.4' fill='none' stroke-linecap='round' stroke-linejoin='round' /><path d='M221.5,1396 Q221.5,1393.5 224,1395 L232.5,1400.5 Q234,1401.8 232.5,1403 L224,1408.5 Q221.5,1410 221.5,1407.5 Z' stroke='#5FB865' stroke-width='2.2' fill='#1E2B21' stroke-linecap='round' stroke-linejoin='round' /><g stroke='#606267' stroke-width='2.2' fill='none' stroke-linejoin='round'><path d='M325.5,1389 Q325.5,1386 328.5,1386 H333 L335.5,1382.5 H342 L344.5,1386 H348.5 Q351.5,1386 351.5,1389 V1402 Q351.5,1405 348.5,1405 H328.5 Q325.5,1405 325.5,1402 Z'/><circle cx='338.5' cy='1395' r='5'/><path d='M383,1390 V1384 Q383,1381.5 385.5,1381.5 H400 Q402.5,1381.5 402.5,1384 V1404 Q402.5,1406.5 400,1406.5 H385.5 Q383,1406.5 383,1404 V1398'/><path d='M378.5,1394 H393 M388,1389 L393,1394 L388,1399'/><path d='M428.5,1405 A15,15 0 1 1 456.5,1405 Z'/><circle cx='442' cy='1397' r='2.6'/><path d='M444,1395 L450,1389'/></g><path d='M459.5,1404 V1412 H451.5 Z' fill='#606267'/><circle cx='494' cy='1384' r='2.4' fill='#CED0D6'/><circle cx='494' cy='1394' r='2.4' fill='#CED0D6'/><circle cx='494' cy='1404.2' r='2.4' fill='#CED0D6'/><path d='M226,1458.5 V1481.5 M217.5,1467 L226,1458.5 L234.5,1467' stroke='#CED0D6' stroke-width='2.2' fill='none' stroke-linecap='round' stroke-linejoin='round' /><path d='M226,1510 V1533.5 M217.5,1525 L226,1533.5 L234.5,1525' stroke='#CED0D6' stroke-width='2.2' fill='none' stroke-linecap='round' stroke-linejoin='round' /><path d='M212.5,1564.5 H239.5 M212.5,1583.5 H221 M230,1588 L225.5,1583.5 L230,1579 M226,1583.5 H233 Q239.5,1583.5 239.5,1577.5 Q239.5,1571.5 233,1571.5 H212.5' stroke='#CED0D6' stroke-width='2.2' fill='none' stroke-linecap='round' stroke-linejoin='round' /><path d='M212.5,1616.5 H221 M212.5,1625.5 H221 M212.5,1635 H239.5 M232,1614 V1630 M225,1623.5 L232,1630 L239,1623.5' stroke='#CED0D6' stroke-width='2.2' fill='none' stroke-linecap='round' stroke-linejoin='round' /><g stroke='#CED0D6' stroke-width='2.2' fill='none' stroke-linejoin='round'><path d='M219.5,1674 V1666.5 H232.5 V1674'/><path d='M219.5,1688.5 H214.5 Q212.5,1688.5 212.5,1686.5 V1677 Q212.5,1674 215.5,1674 H236.5 Q239.5,1674 239.5,1677 V1686.5 Q239.5,1688.5 237.5,1688.5 H232.5'/><path d='M219.5,1682 H232.5 V1689.5 H219.5 Z'/><path d='M213.5,1721 H238 M221,1721 Q221,1716.5 226,1716.5 Q231,1716.5 231,1721 M216,1721 L217,1740 Q217.5,1743 220.5,1743 H231.5 Q234.5,1743 235,1740 L236,1721 M222.5,1727 V1737 M229.5,1727 V1737'/></g><path d='M311.5,2246 L318.0,2252.5 L311.5,2259' stroke='#A8ABB2' stroke-width='2' fill='none' stroke-linecap='round' stroke-linejoin='round' /><path d='M398,2246 L404.5,2252.5 L398,2259' stroke='#A8ABB2' stroke-width='2' fill='none' stroke-linecap='round' stroke-linejoin='round' /><path d='M500,2246 L506.5,2252.5 L500,2259' stroke='#A8ABB2' stroke-width='2' fill='none' stroke-linecap='round' stroke-linejoin='round' /><path d='M596,2246 L602.5,2252.5 L596,2259' stroke='#A8ABB2' stroke-width='2' fill='none' stroke-linecap='round' stroke-linejoin='round' /><path d='M714,2246 L720.5,2252.5 L714,2259' stroke='#A8ABB2' stroke-width='2' fill='none' stroke-linecap='round' stroke-linejoin='round' /><rect x='141' y='2247.5' width='13.5' height='13' rx='3' stroke='#548AF7' stroke-width='2.2' fill='#1F2A44'/><circle cx='757.8' cy='2254' r='12.8' stroke='#548AF7' stroke-width='2.1' fill='#25324D'/><path d='M763.5,2249.5 A6.3,6.3 0 1 0 763.5,2258.5' stroke='#548AF7' stroke-width='2.1' fill='none' stroke-linecap='round' stroke-linejoin='round' /><g transform='translate(2290.50,2242.00) scale(1.0417)'><path d='M22.2819 9.8211a5.9847 5.9847 0 0 0-.5157-4.9108 6.0462 6.0462 0 0 0-6.5098-2.9A6.0651 6.0651 0 0 0 4.9807 4.1818a5.9847 5.9847 0 0 0-3.9977 2.9 6.0462 6.0462 0 0 0 .7427 7.0966 5.98 5.98 0 0 0 .511 4.9107 6.051 6.051 0 0 0 6.5146 2.9001A5.9847 5.9847 0 0 0 13.2599 24a6.0557 6.0557 0 0 0 5.7718-4.2058 5.9894 5.9894 0 0 0 3.9977-2.9001 6.0557 6.0557 0 0 0-.7475-7.0729zm-9.022 12.6081a4.4755 4.4755 0 0 1-2.8764-1.0408l.1419-.0804 4.7783-2.7582a.7948.7948 0 0 0 .3927-.6813v-6.7369l2.02 1.1686a.071.071 0 0 1 .038.052v5.5826a4.504 4.504 0 0 1-4.4945 4.4944zm-9.6607-4.1254a4.4708 4.4708 0 0 1-.5346-3.0137l.142.0852 4.783 2.7582a.7712.7712 0 0 0 .7806 0l5.8428-3.3685v2.3324a.0804.0804 0 0 1-.0332.0615L9.74 19.9502a4.4992 4.4992 0 0 1-6.1408-1.6464zM2.3408 7.8956a4.485 4.485 0 0 1 2.3655-1.9728V11.6a.7664.7664 0 0 0 .3879.6765l5.8144 3.3543-2.0201 1.1685a.0757.0757 0 0 1-.071 0l-4.8303-2.7865A4.504 4.504 0 0 1 2.3408 7.872zm16.5963 3.8558L13.1038 8.364 15.1192 7.2a.0757.0757 0 0 1 .071 0l4.8303 2.7913a4.4944 4.4944 0 0 1-.6765 8.1042v-5.6772a.79.79 0 0 0-.407-.667zm2.0107-3.0231l-.142-.0852-4.7735-2.7818a.7759.7759 0 0 0-.7854 0L9.409 9.2297V6.8974a.0662.0662 0 0 1 .0284-.0615l4.8303-2.7866a4.4992 4.4992 0 0 1 6.6802 4.66zM8.3065 12.863l-2.02-1.1638a.0804.0804 0 0 1-.038-.0567V6.0742a4.4992 4.4992 0 0 1 7.3757-3.4537l-.142.0805L8.704 5.459a.7948.7948 0 0 0-.3927.6813zm1.0976-2.3654l2.602-1.4998 2.6069 1.4998v2.9994l-2.5974 1.5-2.6067-1.5Z' fill='#FFFFFF' stroke='#000' stroke-width='1.7'/><circle cx='12.1' cy='12' r='10.3' fill='#FFFFFF'/><path d='M22.2819 9.8211a5.9847 5.9847 0 0 0-.5157-4.9108 6.0462 6.0462 0 0 0-6.5098-2.9A6.0651 6.0651 0 0 0 4.9807 4.1818a5.9847 5.9847 0 0 0-3.9977 2.9 6.0462 6.0462 0 0 0 .7427 7.0966 5.98 5.98 0 0 0 .511 4.9107 6.051 6.051 0 0 0 6.5146 2.9001A5.9847 5.9847 0 0 0 13.2599 24a6.0557 6.0557 0 0 0 5.7718-4.2058 5.9894 5.9894 0 0 0 3.9977-2.9001 6.0557 6.0557 0 0 0-.7475-7.0729zm-9.022 12.6081a4.4755 4.4755 0 0 1-2.8764-1.0408l.1419-.0804 4.7783-2.7582a.7948.7948 0 0 0 .3927-.6813v-6.7369l2.02 1.1686a.071.071 0 0 1 .038.052v5.5826a4.504 4.504 0 0 1-4.4945 4.4944zm-9.6607-4.1254a4.4708 4.4708 0 0 1-.5346-3.0137l.142.0852 4.783 2.7582a.7712.7712 0 0 0 .7806 0l5.8428-3.3685v2.3324a.0804.0804 0 0 1-.0332.0615L9.74 19.9502a4.4992 4.4992 0 0 1-6.1408-1.6464zM2.3408 7.8956a4.485 4.485 0 0 1 2.3655-1.9728V11.6a.7664.7664 0 0 0 .3879.6765l5.8144 3.3543-2.0201 1.1685a.0757.0757 0 0 1-.071 0l-4.8303-2.7865A4.504 4.504 0 0 1 2.3408 7.872zm16.5963 3.8558L13.1038 8.364 15.1192 7.2a.0757.0757 0 0 1 .071 0l4.8303 2.7913a4.4944 4.4944 0 0 1-.6765 8.1042v-5.6772a.79.79 0 0 0-.407-.667zm2.0107-3.0231l-.142-.0852-4.7735-2.7818a.7759.7759 0 0 0-.7854 0L9.409 9.2297V6.8974a.0662.0662 0 0 1 .0284-.0615l4.8303-2.7866a4.4992 4.4992 0 0 1 6.6802 4.66zM8.3065 12.863l-2.02-1.1638a.0804.0804 0 0 1-.038-.0567V6.0742a4.4992 4.4992 0 0 1 7.3757-3.4537l-.142.0805L8.704 5.459a.7948.7948 0 0 0-.3927.6813zm1.0976-2.3654l2.602-1.4998 2.6069 1.4998v2.9994l-2.5974 1.5-2.6067-1.5Z' fill='#FFFFFF' stroke='#FFFFFF' stroke-width='0.9'/><path d='M22.2819 9.8211a5.9847 5.9847 0 0 0-.5157-4.9108 6.0462 6.0462 0 0 0-6.5098-2.9A6.0651 6.0651 0 0 0 4.9807 4.1818a5.9847 5.9847 0 0 0-3.9977 2.9 6.0462 6.0462 0 0 0 .7427 7.0966 5.98 5.98 0 0 0 .511 4.9107 6.051 6.051 0 0 0 6.5146 2.9001A5.9847 5.9847 0 0 0 13.2599 24a6.0557 6.0557 0 0 0 5.7718-4.2058 5.9894 5.9894 0 0 0 3.9977-2.9001 6.0557 6.0557 0 0 0-.7475-7.0729zm-9.022 12.6081a4.4755 4.4755 0 0 1-2.8764-1.0408l.1419-.0804 4.7783-2.7582a.7948.7948 0 0 0 .3927-.6813v-6.7369l2.02 1.1686a.071.071 0 0 1 .038.052v5.5826a4.504 4.504 0 0 1-4.4945 4.4944zm-9.6607-4.1254a4.4708 4.4708 0 0 1-.5346-3.0137l.142.0852 4.783 2.7582a.7712.7712 0 0 0 .7806 0l5.8428-3.3685v2.3324a.0804.0804 0 0 1-.0332.0615L9.74 19.9502a4.4992 4.4992 0 0 1-6.1408-1.6464zM2.3408 7.8956a4.485 4.485 0 0 1 2.3655-1.9728V11.6a.7664.7664 0 0 0 .3879.6765l5.8144 3.3543-2.0201 1.1685a.0757.0757 0 0 1-.071 0l-4.8303-2.7865A4.504 4.504 0 0 1 2.3408 7.872zm16.5963 3.8558L13.1038 8.364 15.1192 7.2a.0757.0757 0 0 1 .071 0l4.8303 2.7913a4.4944 4.4944 0 0 1-.6765 8.1042v-5.6772a.79.79 0 0 0-.407-.667zm2.0107-3.0231l-.142-.0852-4.7735-2.7818a.7759.7759 0 0 0-.7854 0L9.409 9.2297V6.8974a.0662.0662 0 0 1 .0284-.0615l4.8303-2.7866a4.4992 4.4992 0 0 1 6.6802 4.66zM8.3065 12.863l-2.02-1.1638a.0804.0804 0 0 1-.038-.0567V6.0742a4.4992 4.4992 0 0 1 7.3757-3.4537l-.142.0805L8.704 5.459a.7948.7948 0 0 0-.3927.6813zm1.0976-2.3654l2.602-1.4998 2.6069 1.4998v2.9994l-2.5974 1.5-2.6067-1.5Z' fill='none' stroke='#000' stroke-width='0.55'/></g><defs><linearGradient id='vg' x1='0' y1='0' x2='1' y2='1'><stop offset='0' stop-color='#3FEA5E'/><stop offset='1' stop-color='#087CFA'/></linearGradient></defs><path d='M2351,2241 H2361 V2256 L2369.5,2241 H2377 L2362.5,2267 H2351 Z' fill='url(#vg)'/><g transform='translate(2667.5,2241.5) scale(0.75)'><path d='M4,14.5 Q0,17.5 0,22.5 Q1,34.2 19,34.2 Q37,34.2 38,22.5 Q38,17.5 34,14.5 Z' fill='#CED0D6'/><path d='M7,17 H31 V28 Q25,31.5 19,31.5 Q13,31.5 7,28 Z' fill='#27282A'/><rect x='5.3' y='1.5' width='13.6' height='15.2' rx='6' stroke='#CED0D6' stroke-width='3' fill='#27282A'/><rect x='19.1' y='1.5' width='13.6' height='15.2' rx='6' stroke='#CED0D6' stroke-width='3' fill='#27282A'/><rect x='12.8' y='19.6' width='4' height='7' rx='2' fill='#CED0D6'/><rect x='21' y='19.6' width='4' height='7' rx='2' fill='#CED0D6'/></g><g stroke='#CED0D6' stroke-width='2.2' fill='none'><rect x='2881.5' y='2251' width='19' height='14.5' rx='3.5'/><path d='M2895,2251 V2247 A5.5,5.5 0 0 1 2906,2247 V2252'/><path d='M2891,2255.5 V2260'/></g></svg></div><div class='a' style='left:112px;top:76px;width:2830px;height:2208px;border-radius:20px;border:2px solid #58595C;border-top-color:#76777A;pointer-events:none'></div></body></html>
